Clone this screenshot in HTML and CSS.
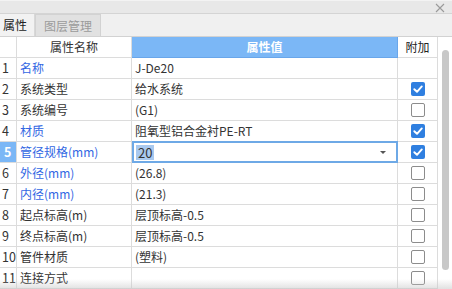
FILE: index.html
```html
<!DOCTYPE html>
<html lang="zh-CN">
<head>
    <meta charset="UTF-8">
    <title>属性</title>
    <link rel="stylesheet" href="styles.css">
</head>
<body>
    <div class="panel">
        <div class="titlebar">
            <svg class="close" width="10" height="10" viewBox="0 0 10 10">
                <path d="M1 1L9 9M9 1L1 9" stroke="#9a9a9a" stroke-width="1.1" fill="none"/>
            </svg>
        </div>

        <div class="tabs">
            <div class="tab active">属性</div>
            <div class="tab">图层管理</div>
        </div>

        <div class="grid-wrap">
            <div class="grid">
                <div class="row head">
                    <div class="cell num"></div>
                    <div class="cell name center">属性名称</div>
                    <div class="cell value selected-col">属性值</div>
                    <div class="cell extra center">附加</div>
                </div>
                <div class="row">
                    <div class="cell num">1</div>
                    <div class="cell name blue">名称</div>
                    <div class="cell value">J-De20</div>
                    <div class="cell extra"></div>
                </div>
                <div class="row">
                    <div class="cell num">2</div>
                    <div class="cell name">系统类型</div>
                    <div class="cell value">给水系统</div>
                    <div class="cell extra"><span class="check on"></span></div>
                </div>
                <div class="row">
                    <div class="cell num">3</div>
                    <div class="cell name">系统编号</div>
                    <div class="cell value">(G1)</div>
                    <div class="cell extra"><span class="check"></span></div>
                </div>
                <div class="row">
                    <div class="cell num">4</div>
                    <div class="cell name blue">材质</div>
                    <div class="cell value">阻氧型铝合金衬PE-RT</div>
                    <div class="cell extra"><span class="check on"></span></div>
                </div>
                <div class="row current">
                    <div class="cell num">5</div>
                    <div class="cell name blue">管径规格(mm)</div>
                    <div class="cell value editing">
                        <span class="sel">20</span>
                        <span class="arrow"></span>
                    </div>
                    <div class="cell extra"><span class="check on"></span></div>
                </div>
                <div class="row">
                    <div class="cell num">6</div>
                    <div class="cell name blue">外径(mm)</div>
                    <div class="cell value">(26.8)</div>
                    <div class="cell extra"><span class="check"></span></div>
                </div>
                <div class="row">
                    <div class="cell num">7</div>
                    <div class="cell name blue">内径(mm)</div>
                    <div class="cell value">(21.3)</div>
                    <div class="cell extra"><span class="check"></span></div>
                </div>
                <div class="row">
                    <div class="cell num">8</div>
                    <div class="cell name">起点标高(m)</div>
                    <div class="cell value">层顶标高-0.5</div>
                    <div class="cell extra"><span class="check"></span></div>
                </div>
                <div class="row">
                    <div class="cell num">9</div>
                    <div class="cell name">终点标高(m)</div>
                    <div class="cell value">层顶标高-0.5</div>
                    <div class="cell extra"><span class="check"></span></div>
                </div>
                <div class="row">
                    <div class="cell num">10</div>
                    <div class="cell name">管件材质</div>
                    <div class="cell value">(塑料)</div>
                    <div class="cell extra"><span class="check"></span></div>
                </div>
                <div class="row">
                    <div class="cell num">11</div>
                    <div class="cell name">连接方式</div>
                    <div class="cell value"></div>
                    <div class="cell extra"><span class="check"></span></div>
                </div>
            </div>

            <div class="vscroll">
                <div class="thumb"></div>
            </div>

            <div class="fade"></div>
        </div>
    </div>
</body>
</html>
```

FILE: styles.css
```css
body {
    margin: 0;
    background-color: #ffffff;
    font-family: "Noto Sans CJK SC", "Noto Sans", sans-serif;
    font-size: 12px;
    color: #333;
}

.panel {
    width: 452px;
    height: 289px;
    overflow: hidden;
}

.titlebar {
    height: 14px;
    box-sizing: border-box;
    background-color: #e8e8e8;
    border-top: 1px solid #f3f3f3;
    border-bottom: 1px solid #d4d4d4;
    display: flex;
    justify-content: flex-end;
    align-items: center;
    padding-right: 7px;
}

.close {
    display: block;
    margin-top: 1px;
}

/* onglets */
.tabs {
    height: 23px;
    box-sizing: border-box;
    background-color: #f0f0f0;
    border-bottom: 1px solid #d2d2d2;
    display: flex;
}

.tab {
    height: 22px;
    line-height: 22px;
    padding: 0 3px;
    box-sizing: border-box;
    width: 66px;
    background-color: #e1e1e1;
    border: 1px solid #d2d2d2;
    border-bottom: none;
    color: #9b9b9b;
    text-align: center;
}

.tab.active {
    width: 35px;
    background-color: #f2f2f2;
    border: none;
    border-right: 1px solid #d8d8d8;
    color: #222;
    text-align: left;
}

/* grille */
.grid-wrap {
    position: relative;
    display: flex;
    height: 252px;
}

.grid {
    width: 438px;
}

.row {
    display: grid;
    grid-template-columns: 17px 115px 266px 40px;
    height: 21px;
}

.cell {
    box-sizing: border-box;
    border-right: 1px solid #dcdcdc;
    border-bottom: 1px solid #dcdcdc;
    line-height: 20px;
    white-space: nowrap;
    overflow: hidden;
}

.num {
    padding-left: 2px;
    font-size: 12.5px;
    color: #333;
}

.name {
    padding-left: 3px;
}

.value {
    padding-left: 3px;
}

.center {
    text-align: center;
    padding-left: 0;
}

.blue {
    color: #3267e3;
}

.head .value {
    text-align: center;
    padding-left: 0;
    font-weight: bold;
    color: #ffffff;
    background-color: #7bb7f6;
    border-right-color: #69a6ea;
    border-bottom-color: #69a6ea;
}

.head .extra {
    color: #222;
}

.current .num {
    background-color: #7bb7f6;
    color: #ffffff;
    font-weight: bold;
    padding-left: 4px;
}

.editing {
    border: 2px solid #6ea9e6;
    margin-top: -1px;
    height: 22px;
    padding-left: 2px;
    display: flex;
    align-items: center;
    justify-content: space-between;
    line-height: 15px;
}

.sel {
    background-color: #a9c9ef;
    color: #333;
    font-size: 13px;
    padding: 0 2px;
}

.arrow {
    width: 0;
    height: 0;
    border-left: 3px solid transparent;
    border-right: 3px solid transparent;
    border-top: 3px solid #555;
    margin-right: 10px;
}

.extra {
    display: flex;
    justify-content: center;
    align-items: center;
}

.check {
    width: 14px;
    height: 14px;
    box-sizing: border-box;
    border: 1px solid #8c8c8c;
    border-radius: 2px;
    background-color: #fff;
}

.check.on {
    border: none;
    background-color: #2f7fe0;
    background-image: url("data:image/svg+xml;utf8,<svg xmlns='http://www.w3.org/2000/svg' width='14' height='14' viewBox='0 0 14 14'><path d='M3.3 7.2L6 9.8L10.8 4.4' stroke='white' stroke-width='1.9' fill='none' stroke-linecap='round' stroke-linejoin='round'/></svg>");
}

/* barre de défilement */
.vscroll {
    width: 14px;
    background-color: #ffffff;
}

.thumb {
    width: 7px;
    height: 220px;
    margin: 13px 0 0 4px;
    background-color: #c8c8c8;
    border-radius: 4px;
}

.fade {
    position: absolute;
    left: 0;
    right: 0;
    bottom: 0;
    height: 10px;
    background: linear-gradient(rgba(255, 255, 255, 0), rgba(200, 200, 200, 0.55));
    pointer-events: none;
}
```
